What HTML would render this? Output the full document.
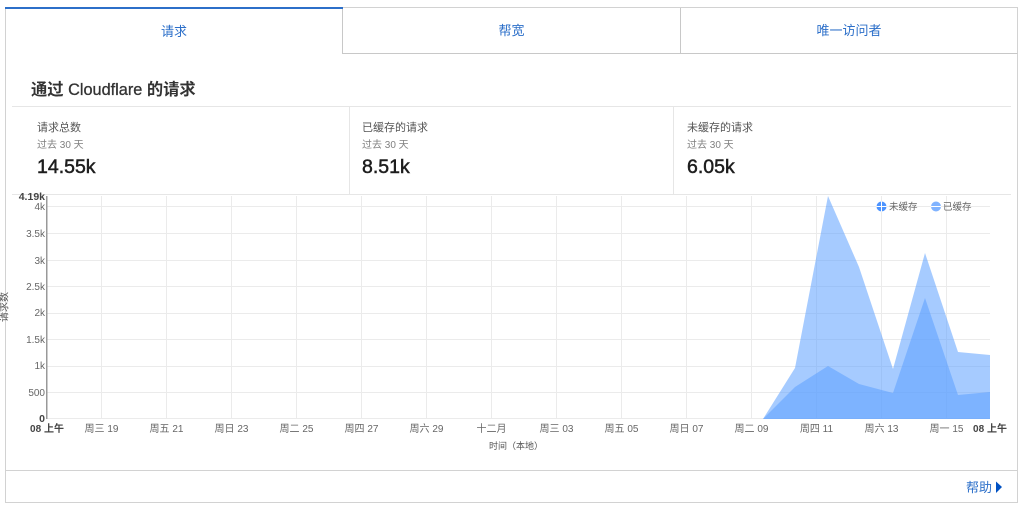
<!DOCTYPE html>
<html lang="zh">
<head>
<meta charset="utf-8">
<title>通过 Cloudflare 的请求</title>
<style>
html,body{margin:0;padding:0;width:1024px;height:513px;background:#fff;overflow:hidden}
svg{display:block;font-family:"Liberation Sans","Noto Sans CJK SC",sans-serif;filter:blur(.3px)}
.tk{font-size:10px;fill:#666;text-anchor:end}
.xl{font-size:10px;fill:#666;text-anchor:middle}
.b{font-weight:bold;fill:#444}
.lab{font-size:11px;fill:#555}
.sub{font-size:10px;fill:#808080}
.num{font-size:19.5px;fill:#1d1d1d;stroke:#1d1d1d;stroke-width:.5px}
.tab{font-size:13px;fill:#2c6fc9;text-anchor:middle}
</style>
</head>
<body>
<svg width="1024" height="513" viewBox="0 0 1024 513" xmlns="http://www.w3.org/2000/svg">
  <!-- outer frame -->
  <rect x="5.5" y="7.5" width="1012" height="495" fill="#fff" stroke="#d2d2d2"/>
  <!-- tabs -->
  <path d="M342.5 8V53.5H1017.5M680.5 8V53.5" fill="none" stroke="#c8c8c8"/>
  <rect x="5" y="7" width="338" height="2" fill="#2c6fc9"/>
  <text class="tab" x="174" y="36">请求</text>
  <text class="tab" x="511.500" y="35">帮宽</text>
  <text class="tab" x="849" y="35">唯一访问者</text>

  <text x="31" y="95" font-size="16.300" fill="#333"><tspan font-weight="bold">通过</tspan><tspan stroke="#333" stroke-width=".3"> Cloudflare </tspan><tspan font-weight="bold">的请求</tspan></text>

  <!-- stat dividers -->
  <path d="M12 106.500H1011M12 194.500H1011M349.500 107V194M673.500 107V194" fill="none" stroke="#e6e6e6"/>
  <text class="lab" x="37" y="131">请求总数</text>
  <text class="sub" x="37" y="148">过去 30 天</text>
  <text class="num" x="37" y="173">14.55k</text>
  <text class="lab" x="362" y="131">已缓存的请求</text>
  <text class="sub" x="362" y="148">过去 30 天</text>
  <text class="num" x="362" y="173">8.51k</text>
  <text class="lab" x="687" y="131">未缓存的请求</text>
  <text class="sub" x="687" y="148">过去 30 天</text>
  <text class="num" x="687" y="173">6.05k</text>

  <!-- grid -->
  <path d="M47 206.500H990M47 233.500H990M47 260.500H990M47 286.500H990M47 313.500H990M47 339.500H990M47 366.500H990M47 392.500H990M47 418.500H990" fill="none" stroke="#ebebeb"/>
  <path d="M101.500 196V419M166.500 196V419M231.500 196V419M296.500 196V419M361.500 196V419M426.500 196V419M491.500 196V419M556.500 196V419M621.500 196V419M686.500 196V419M751.500 196V419M816.500 196V419M881.500 196V419M946.500 196V419" fill="none" stroke="#ebebeb"/>
  <path d="M46.750 196V419" fill="none" stroke="#999" stroke-width="1.500"/>

  <!-- areas -->
  <polygon points="763,419 795,368 828,196 859,267 893,369 925,253 958,352 990,355 990,419" fill="#5a9eff" opacity=".54"/>
  <polygon points="763,419 795,387 828,366 859,384 893,393 925,298 958,395 990,392 990,419" fill="#5a9eff" opacity=".54"/>

  <!-- y ticks -->
  <text class="tk b" x="45" y="200" style="font-size:10.500px">4.19k</text>
  <text class="tk" x="45" y="210">4k</text>
  <text class="tk" x="45" y="237">3.5k</text>
  <text class="tk" x="45" y="264">3k</text>
  <text class="tk" x="45" y="290">2.5k</text>
  <text class="tk" x="45" y="316">2k</text>
  <text class="tk" x="45" y="343">1.5k</text>
  <text class="tk" x="45" y="369">1k</text>
  <text class="tk" x="45" y="396">500</text>
  <text class="tk b" x="45" y="422" style="font-size:10.500px">0</text>
  <text x="0" y="0" font-size="10" fill="#555" text-anchor="middle" transform="translate(7.500 307) rotate(-90)">请求数</text>

  <!-- x ticks -->
  <text class="xl b" x="47" y="432">08 上午</text>
  <text class="xl" x="101.500" y="432">周三 19</text>
  <text class="xl" x="166.500" y="432">周五 21</text>
  <text class="xl" x="231.500" y="432">周日 23</text>
  <text class="xl" x="296.500" y="432">周二 25</text>
  <text class="xl" x="361.500" y="432">周四 27</text>
  <text class="xl" x="426.500" y="432">周六 29</text>
  <text class="xl" x="491.500" y="432">十二月</text>
  <text class="xl" x="556.500" y="432">周三 03</text>
  <text class="xl" x="621.500" y="432">周五 05</text>
  <text class="xl" x="686.500" y="432">周日 07</text>
  <text class="xl" x="751.500" y="432">周二 09</text>
  <text class="xl" x="816.500" y="432">周四 11</text>
  <text class="xl" x="881.500" y="432">周六 13</text>
  <text class="xl" x="946.500" y="432">周一 15</text>
  <text class="xl b" x="990" y="432">08 上午</text>
  <text x="516" y="449" font-size="9" fill="#555" text-anchor="middle">时间（本地）</text>

  <!-- legend -->
  <circle cx="881.500" cy="206.500" r="5" fill="#4d94ff"/>
  <path d="M876.500 206.500H886.500M881.500 201.500V211.500" stroke="#fff" stroke-width="1" fill="none"/>
  <text x="889" y="210" font-size="9.500" fill="#666">未缓存</text>
  <circle cx="936" cy="206.500" r="5" fill="#80b3ff"/>
  <path d="M931 206.500H941" stroke="#fff" stroke-width="1" fill="none"/>
  <text x="943" y="210" font-size="9.500" fill="#666">已缓存</text>

  <!-- footer -->
  <path d="M5 470.500H1018" fill="none" stroke="#d2d2d2"/>
  <text x="966" y="492" font-size="13" fill="#2c6fc9">帮助</text>
  <polygon points="996,481.500 1002,487 996,493" fill="#0051c3"/>
</svg>
</body>
</html>
